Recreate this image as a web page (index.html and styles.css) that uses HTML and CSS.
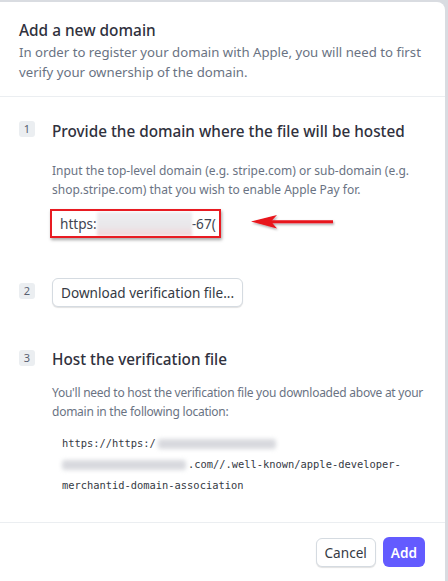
FILE: index.html
```html
<!DOCTYPE html>
<html>
<head>
<meta charset="utf-8">
<link rel="stylesheet" href="styles.css">
</head>
<body>
<div class="modal">
  <header class="head">
    <h1 class="title">Add a new domain</h1>
    <p class="subtitle">In order to register your domain with Apple, you will need to first<br>verify your ownership of the domain.</p>
  </header>
  <div class="body">
    <section class="step step-1">
      <span class="badge">1</span>
      <div class="step-main">
        <h2 class="step-title">Provide the domain where the file will be hosted</h2>
        <p class="desc">Input the top-level domain (e.g. stripe.com) or sub-domain (e.g.<br>shop.stripe.com) that you wish to enable Apple Pay for.</p>
        <div class="input-row">
          <div class="input"><span class="val">https:</span><span class="blur-pink"></span><span class="val">-67(</span></div>
          <svg class="arrow" width="90" height="20" viewBox="0 0 90 20">
            <defs><filter id="sh" x="-20%" y="-50%" width="140%" height="200%"><feDropShadow dx="1" dy="1.5" stdDeviation="1.2" flood-color="#000" flood-opacity="0.35"/></filter></defs>
            <g filter="url(#sh)">
              <path d="M22 8.2 H84 V11.2 H22 Z" fill="#e8141b"/>
              <path d="M2 9.6 L28 3 L22 9.6 L28 16.5 Z" fill="#e8141b"/>
            </g>
          </svg>
        </div>
      </div>
    </section>
    <section class="step step-2">
      <span class="badge">2</span>
      <div class="step-main">
        <button class="btn btn-secondary">Download verification file...</button>
      </div>
    </section>
    <section class="step step-3">
      <span class="badge">3</span>
      <div class="step-main">
        <h2 class="step-title">Host the verification file</h2>
        <p class="desc desc-tight">You'll need to host the verification file you downloaded above at your<br>domain in the following location:</p>
        <div class="code">
          <div class="code-line">https://https:/<span class="blur-gray b1"></span></div>
          <div class="code-line"><span class="blur-gray b2"></span>.com//.well-known/apple-developer-</div>
          <div class="code-line">merchantid-domain-association</div>
        </div>
      </div>
    </section>
  </div>
  <footer class="foot">
    <button class="btn btn-secondary btn-cancel">Cancel</button>
    <button class="btn btn-primary">Add</button>
  </footer>
</div>
</body>
</html>
```

FILE: styles.css
```css
* { box-sizing: border-box; }
html, body { margin: 0; padding: 0; }
body {
  background: #d9dce1;
  font-family: "Noto Sans", "Open Sans", sans-serif;
  color: #30313d;
  height: 581px;
  overflow: hidden;
}
.modal {
  background: #fff;
  margin: 2px 0 0 -8px;
  width: 453px;
  height: 590px;
  border-radius: 8px;
  display: flex;
  flex-direction: column;
}
.head {
  padding: 18px 20px 0 27px;
  height: 95px;
  border-bottom: 1px solid #ebeef1;
}
.title {
  margin: 0;
  font-size: 15.4px;
  font-weight: 500;
  line-height: 22px;
  color: #30313d;
}
.subtitle {
  margin: 0;
  font-size: 13.2px;
  line-height: 20px;
  color: #6a7383;
  white-space: nowrap;
}
.body {
  padding: 24px 0 0 27px;
  height: 426px;
  border-bottom: 1px solid #ebeef1;
}
.step {
  display: flex;
  align-items: flex-start;
}
.badge {
  flex: none;
  width: 16px;
  height: 16px;
  border-radius: 3px;
  background: #ebeef1;
  color: #596171;
  font-size: 11px;
  line-height: 16px;
  text-align: center;
  margin-top: 0;
}
.step-main {
  margin-left: 17px;
}
.step-title {
  margin: 0;
  font-size: 15.3px;
  font-weight: 500;
  line-height: 20px;
  color: #30313d;
}
.desc {
  margin: 20px 0 0;
  font-size: 12px;
  line-height: 19px;
  color: #6a7383;
  white-space: nowrap;
}
.desc-tight { letter-spacing: -0.25px; }
.input-row {
  display: flex;
  align-items: center;
  margin-top: 10px;
  margin-left: -2px;
}
.input {
  width: 171px;
  height: 29px;
  border: 2px solid #e81b22;
  box-shadow: 1px 2px 3px rgba(0,0,0,0.35), inset 0 0 0 1px #fff;
  display: flex;
  align-items: center;
  padding-left: 8px;
  font-size: 13.6px;
  color: #414552;
  overflow: hidden;
  white-space: nowrap;
}
.blur-pink {
  display: inline-block;
  width: 95px;
  height: 24px;
  background: linear-gradient(#ededf0 0%, #e9e7ea 60%, #f3d5d8 100%);
  filter: blur(1.5px);
}
.arrow {
  margin-left: 28px;
  margin-top: -4px;
}
.step-2 { margin-top: 40px; }
.step-2 .badge { margin-top: 5px; }
.btn {
  font-family: inherit;
  font-size: 13.6px;
  border-radius: 6px;
  cursor: pointer;
}
.btn-secondary {
  background: #fff;
  color: #353a44;
  border: 1px solid #d5dbe1;
  box-shadow: 0 1px 1px rgba(0,0,0,0.12);
  height: 29px;
  padding: 0 8px;
}
.step-3 { margin-top: 42px; }
.step-3 .badge { margin-top: 1px; }
.step-3 .desc { margin-top: 14px; }
.code {
  margin-top: 12px;
  padding-left: 10px;
  font-family: "DejaVu Sans Mono", "Liberation Mono", monospace;
  font-size: 10.4px;
  line-height: 21px;
  color: #353a44;
}
.code-line { white-space: nowrap; height: 21px; display: flex; align-items: center; }
.blur-gray {
  display: inline-block;
  height: 10px;
  background: #d8d9de;
  filter: blur(2px);
  border-radius: 3px;
}
.b1 { width: 118px; margin-left: 2px; }
.b2 { width: 124px; margin-right: 2px; }
.foot {
  display: flex;
  justify-content: flex-end;
  gap: 7px;
  padding: 15px 20px 0 0;
}
.btn-cancel { height: 29px; padding: 0 8px; }
.btn-primary {
  background: #635bff;
  color: #fff;
  border: none;
  font-weight: 600;
  height: 30px;
  padding: 0 8px;
  margin-top: -1px;
}
```
